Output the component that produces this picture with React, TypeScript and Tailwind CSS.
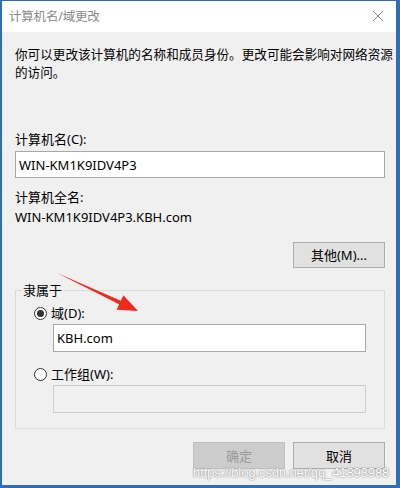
import React from "react";

const font = { fontFamily: '"Noto Sans", "Noto Sans CJK SC", sans-serif' };

function Radio({ checked }: { checked?: boolean }) {
  return (
    <span className="w-[13px] h-[13px] rounded-full border border-[#333333] bg-white flex items-center justify-center shrink-0">
      {checked && <span className="w-[7px] h-[7px] rounded-full bg-[#333333]" />}
    </span>
  );
}

export default function App() {
  return (
    <div
      className="w-[400px] h-[488px] bg-[#2a6fb8] pl-[2px] pr-[4px] pt-[1px] pb-[3px] overflow-hidden"
      style={font}
    >
      <div className="relative w-full h-full bg-[#f0f0f0] flex flex-col text-[13px] leading-[18px] text-black">
        {/* title bar */}
        <div className="h-[31px] bg-white flex items-center justify-between pl-[7px] pr-[12px] shrink-0">
          <span className="text-[12.5px] text-[#8a8a8a] tracking-[-0.2px]">计算机名/域更改</span>
          <svg width="12" height="12" viewBox="0 0 12 12" className="mb-[1px]">
            <path d="M1 1 L11 11 M11 1 L1 11" stroke="#8a8a8a" strokeWidth="1" fill="none" />
          </svg>
        </div>

        {/* body */}
        <div className="flex-1 flex flex-col pl-[13px] pr-[11px] pt-[14px]">
          <p className="text-[12.6px] whitespace-nowrap">
            你可以更改该计算机的名称和成员身份。更改可能会影响对网络资源
            <br />
            的访问。
          </p>

          <div className="mt-[48px]">计算机名(C):</div>
          <div className="mt-[3px] h-[27px] border border-[#a8a8a8] bg-white flex items-center px-[3px] text-[13px]">
            WIN-KM1K9IDV4P3
          </div>

          <div className="mt-[10px]">计算机全名:</div>
          <div className="mt-[2px] text-[13px]">WIN-KM1K9IDV4P3.KBH.com</div>

          <div className="mt-[16px] flex justify-end">
            <button className="w-[92px] h-[26px] bg-[#e1e1e1] border border-[#adadad] text-[13px] flex items-center justify-center">
              其他(M)...
            </button>
          </div>

          <fieldset className="mt-[13px] border border-[#dcdcdc] pl-[18px] pr-[10px] pt-[5px] pb-[15px]">
            <legend className="-ml-[12px] px-[1px]">隶属于</legend>
            <div className="flex items-center gap-[4px] h-[18px]">
              <Radio checked />
              <span>域(D):</span>
            </div>
            <div className="mt-[2px] ml-[19px] w-[313px] h-[28px] border border-[#a8a8a8] bg-white flex items-center px-[3px] text-[13px]">
              KBH.com
            </div>
            <div className="mt-[13px] flex items-center gap-[4px] h-[18px]">
              <Radio />
              <span>工作组(W):</span>
            </div>
            <div className="mt-[2px] ml-[19px] w-[313px] h-[28px] border border-[#cccccc] bg-[#f0f0f0]" />
          </fieldset>

          <div className="mt-[13px] flex justify-end gap-[8px]">
            <button className="w-[92px] h-[27px] bg-[#cccccc] border border-[#bfbfbf] text-[#9a9a9a] flex items-center justify-center">
              确定
            </button>
            <button className="w-[92px] h-[27px] bg-[#e1e1e1] border border-[#adadad] flex items-center justify-center">
              取消
            </button>
          </div>
        </div>

        {/* red annotation arrow */}
        <svg className="absolute left-[-2px] top-[-1px] pointer-events-none" width="400" height="488" viewBox="0 0 400 488">
          <polygon
            points="57,273 120.85,300.7 123.4,295.3 138,311 116.6,309.7 119.15,304.3"
            fill="#ee2a1b"
          />
        </svg>

        {/* watermark */}
        <div
          className="absolute left-[191px] top-[465px] text-[13px] leading-[14px] text-white whitespace-nowrap tracking-[-0.1px]"
          style={{ textShadow: "0 0 2px #8a8a8a, 0 0 1px #8a8a8a", fontFamily: '"Liberation Sans", sans-serif' }}
        >
          https://blog.csdn.net/qq_41893988
        </div>
      </div>
    </div>
  );
}
